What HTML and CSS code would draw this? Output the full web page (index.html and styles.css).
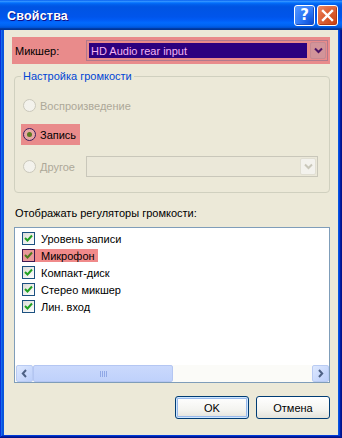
FILE: index.html
```html
<!DOCTYPE html>
<html lang="ru">
<head>
<meta charset="utf-8">
<title>Свойства</title>
<link rel="stylesheet" href="styles.css">
</head>
<body>
<div class="window">
  <div class="titlebar">
    <span class="title">Свойства</span>
    <div class="tbtns">
      <span class="tbtn help">?</span>
      <span class="tbtn close"><svg width="13" height="13" viewBox="0 0 13 13"><path d="M2 2 L11 11 M11 2 L2 11" stroke="#fff" stroke-width="2.4" stroke-linecap="square"/></svg></span>
    </div>
  </div>
  <div class="client">
    <div class="mixer-row">
      <span class="mixer-label">Микшер:</span>
      <div class="combo combo-active">
        <span class="combo-text">HD Audio rear input</span>
        <span class="dd"><svg width="9" height="7" viewBox="0 0 9 7"><path d="M1 1.5 L4.5 5 L8 1.5" fill="none" stroke="#4a1466" stroke-width="2"/></svg></span>
      </div>
    </div>

    <fieldset class="group">
      <legend>Настройка громкости</legend>
      <div class="opt opt1 disabled"><span class="radio"></span><span>Воспроизведение</span></div>
      <div class="opt opt2"><span class="hlbox"><span class="radio checked"><span class="dot"></span></span><span>Запись</span></span></div>
      <div class="opt opt3 disabled">
        <span class="radio"></span><span>Другое</span>
        <div class="combo combo-disabled">
          <span class="combo-text"></span>
          <span class="dd"><svg width="9" height="7" viewBox="0 0 9 7"><path d="M1 1.5 L4.5 5 L8 1.5" fill="none" stroke="#c9c7ba" stroke-width="2"/></svg></span>
        </div>
      </div>
    </fieldset>

    <div class="list-label">Отображать регуляторы громкости:</div>
    <div class="listbox">
      <div class="items">
        <div class="item"><span class="itembox"><span class="cb"><svg width="9" height="9" viewBox="0 0 9 9"><path d="M1 4 L3.5 6.5 L8 1.5" fill="none" stroke="#21a121" stroke-width="2"/></svg></span><span>Уровень записи</span></span></div>
        <div class="item"><span class="itembox hl"><span class="cb"><svg width="9" height="9" viewBox="0 0 9 9"><path d="M1 4 L3.5 6.5 L8 1.5" fill="none" stroke="#4f7a1c" stroke-width="2"/></svg></span><span>Микрофон</span></span></div>
        <div class="item"><span class="itembox"><span class="cb"><svg width="9" height="9" viewBox="0 0 9 9"><path d="M1 4 L3.5 6.5 L8 1.5" fill="none" stroke="#21a121" stroke-width="2"/></svg></span><span>Компакт-диск</span></span></div>
        <div class="item"><span class="itembox"><span class="cb"><svg width="9" height="9" viewBox="0 0 9 9"><path d="M1 4 L3.5 6.5 L8 1.5" fill="none" stroke="#21a121" stroke-width="2"/></svg></span><span>Стерео микшер</span></span></div>
        <div class="item"><span class="itembox"><span class="cb"><svg width="9" height="9" viewBox="0 0 9 9"><path d="M1 4 L3.5 6.5 L8 1.5" fill="none" stroke="#21a121" stroke-width="2"/></svg></span><span>Лин. вход</span></span></div>
      </div>
      <div class="hscroll">
        <span class="sbtn"><svg width="7" height="9" viewBox="0 0 7 9"><path d="M5 1 L1.8 4.5 L5 8" fill="none" stroke="#4d6185" stroke-width="2"/></svg></span>
        <span class="thumb"><svg width="7" height="6" viewBox="0 0 7 6"><path d="M0.5 0 V6 M2.5 0 V6 M4.5 0 V6 M6.5 0 V6" stroke="#8fa8e6" stroke-width="1"/></svg></span>
        <span class="track"></span>
        <span class="sbtn"><svg width="7" height="9" viewBox="0 0 7 9"><path d="M2 1 L5.2 4.5 L2 8" fill="none" stroke="#4d6185" stroke-width="2"/></svg></span>
      </div>
    </div>

    <div class="buttons">
      <button class="btn default">OK</button>
      <button class="btn">Отмена</button>
    </div>
  </div>
</div>
</body>
</html>
```

FILE: styles.css
```css
* { box-sizing: border-box; }
html, body { margin: 0; padding: 0; }
body {
  width: 342px;
  height: 438px;
  font-family: "Liberation Sans", Arial, sans-serif;
  font-size: 11px;
  color: #000;
  background: #0855dd;
}
.window {
  width: 342px;
  height: 438px;
  display: flex;
  flex-direction: column;
  background: #0855dd;
  padding: 0 4px 3px 4px;
  box-shadow: inset -1px -1px #00138c, inset 1px 1px #0831d9, inset -2px -2px #001ea0, inset 2px 2px #166aee, inset -3px -3px #003bda, inset 3px 3px #0855dd;
}
.titlebar {
  height: 30px;
  margin: 0 -4px;
  display: flex;
  align-items: center;
  padding: 0 4px 0 7px;
  background: linear-gradient(to bottom, #0058ee 0%, #3593ff 4%, #288eff 6%, #127dff 8%, #036ffc 10%, #0262ee 14%, #0057e5 20%, #0054e3 24%, #0055eb 56%, #005bf5 66%, #026afe 76%, #0062ef 86%, #0052d6 92%, #0040ab 94%, #003092 100%);
}
.title {
  flex: 1;
  color: #fff;
  font-weight: bold;
  font-size: 12.5px;
  letter-spacing: 0.2px;
  text-shadow: 1px 1px #0f1089;
  padding-top: 1px;
}
.tbtns { display: flex; gap: 2px; }
.tbtn {
  width: 21px;
  height: 21px;
  border: 1px solid #fff;
  border-radius: 3px;
  display: flex;
  align-items: center;
  justify-content: center;
  color: #fff;
}
.help {
  background: radial-gradient(circle at 90% 90%, #0c4fd8 0%, #2a74f5 45%, #4f93ff 90%);
  font: bold 15px "DejaVu Sans", sans-serif;
  box-shadow: inset -1px -1px #1b4fbe;
}
.close {
  background: radial-gradient(circle at 90% 90%, #cc4414 0%, #dc6035 55%, #f08a64 100%);
  box-shadow: inset -1px -1px #b73a14;
}
.client {
  flex: 1;
  background: #ece9d8;
  display: flex;
  flex-direction: column;
}

/* Mixer row */
.mixer-row {
  margin: 7px 8px 0 8px;
  height: 27px;
  background: #e98b8b;
  display: flex;
  align-items: center;
  padding: 0 2px 0 3px;
}
.mixer-label { flex: 1; }
.combo {
  height: 21px;
  display: flex;
  padding: 2px 1px 2px 2px;
}
.combo-active {
  width: 242px;
  border: 1px solid #b07a8c;
  background: #e98b8b;
}
.combo-text {
  flex: 1;
  display: flex;
  align-items: center;
  padding-left: 2px;
}
.combo-active .combo-text {
  background: #2c007f;
  color: #f2b3f2;
  margin-right: 3px;
}
.dd {
  width: 16px;
  display: flex;
  align-items: center;
  justify-content: center;
  border-radius: 2px;
  margin: -1px 0;
}
.combo-active .dd {
  background: #d29499;
  border: 1px solid #c58a92;
}

/* Group */
.group {
  margin: 5px 8px 0 10px;
  border: 1px solid #d0d0bf;
  border-radius: 4px;
  padding: 12px 11px 15px 6px;
  min-width: 0;
}
.group legend {
  color: #0046d5;
  padding: 0 2px;
  line-height: 14px;
}
.opt {
  height: 21px;
  display: flex;
  align-items: center;
}
.opt1 { padding-left: 2px; }
.opt2 { margin-top: 8px; }
.opt3 { margin-top: 11px; padding-left: 2px; }
.disabled { color: #aca899; }
.radio {
  width: 13px;
  height: 13px;
  border-radius: 50%;
  border: 1px solid #cac8bb;
  background: #f3f2ec;
  margin-right: 4px;
  display: flex;
  align-items: center;
  justify-content: center;
  flex: none;
}
.hlbox {
  height: 21px;
  display: flex;
  align-items: center;
  background: #e98b8b;
  padding: 0 4px 0 2px;
}
.radio.checked {
  border-color: #3a1c5e;
  background: #e7a7a5;
}
.dot {
  width: 5px;
  height: 5px;
  border-radius: 50%;
  background: #5d7a20;
}
.combo-disabled {
  margin-left: auto;
  width: 232px;
  border: 1px solid #c9c7ba;
  background: #ebe8d9;
}
.combo-disabled .dd {
  background: #f3f2ed;
  border: 1px solid #e1dfd3;
}

/* List */
.list-label {
  margin: 14px 0 0 11px;
  line-height: 13px;
}
.listbox {
  margin: 7px 8px 0 10px;
  height: 156px;
  border: 1px solid #7f9db9;
  background: #fff;
  display: flex;
  flex-direction: column;
}
.items {
  flex: 1;
  padding: 2px 0 0 7px;
}
.item {
  height: 17px;
  display: flex;
  align-items: center;
}
.itembox {
  height: 13px;
  display: flex;
  align-items: center;
  padding-right: 3px;
}
.itembox.hl { background: #f08a8a; }
.cb {
  width: 13px;
  height: 13px;
  border: 1px solid #1c5180;
  background: linear-gradient(135deg, #dcdcd7, #fff);
  margin-right: 6px;
  display: flex;
  align-items: center;
  justify-content: center;
  flex: none;
}
.itembox.hl .cb {
  border-color: #3d1850;
  background: #e9999a;
}
.hscroll {
  height: 17px;
  display: flex;
  background: #fbfbf8;
  padding: 0 0 0 1px;
}
.sbtn {
  width: 17px;
  height: 17px;
  border: 1px solid #b9cbf3;
  border-radius: 2px;
  background: linear-gradient(135deg, #dde8fe, #bccffb);
  display: flex;
  align-items: center;
  justify-content: center;
  flex: none;
}
.thumb {
  width: 140px;
  height: 17px;
  border: 1px solid #b4c6f2;
  border-radius: 2px;
  background: linear-gradient(to bottom, #cad9fc, #bfd1fb);
  display: flex;
  align-items: center;
  justify-content: center;
  flex: none;
}
.track { flex: 1; }

/* Buttons */
.buttons {
  margin: 13px 8px 0 0;
  display: flex;
  justify-content: flex-end;
  gap: 7px;
}
.btn {
  width: 74px;
  height: 23px;
  font-family: "Liberation Sans", Arial, sans-serif;
  font-size: 11px;
  color: #000;
  border: 1px solid #003c74;
  border-radius: 3px;
  background: linear-gradient(to bottom, #fff 0%, #f4f4f0 60%, #e3e2da 100%);
  padding: 0;
}
.btn.default {
  box-shadow: inset 0 0 0 1px #cee7ff, inset 0 0 0 2px #98b8ea;
}
```
